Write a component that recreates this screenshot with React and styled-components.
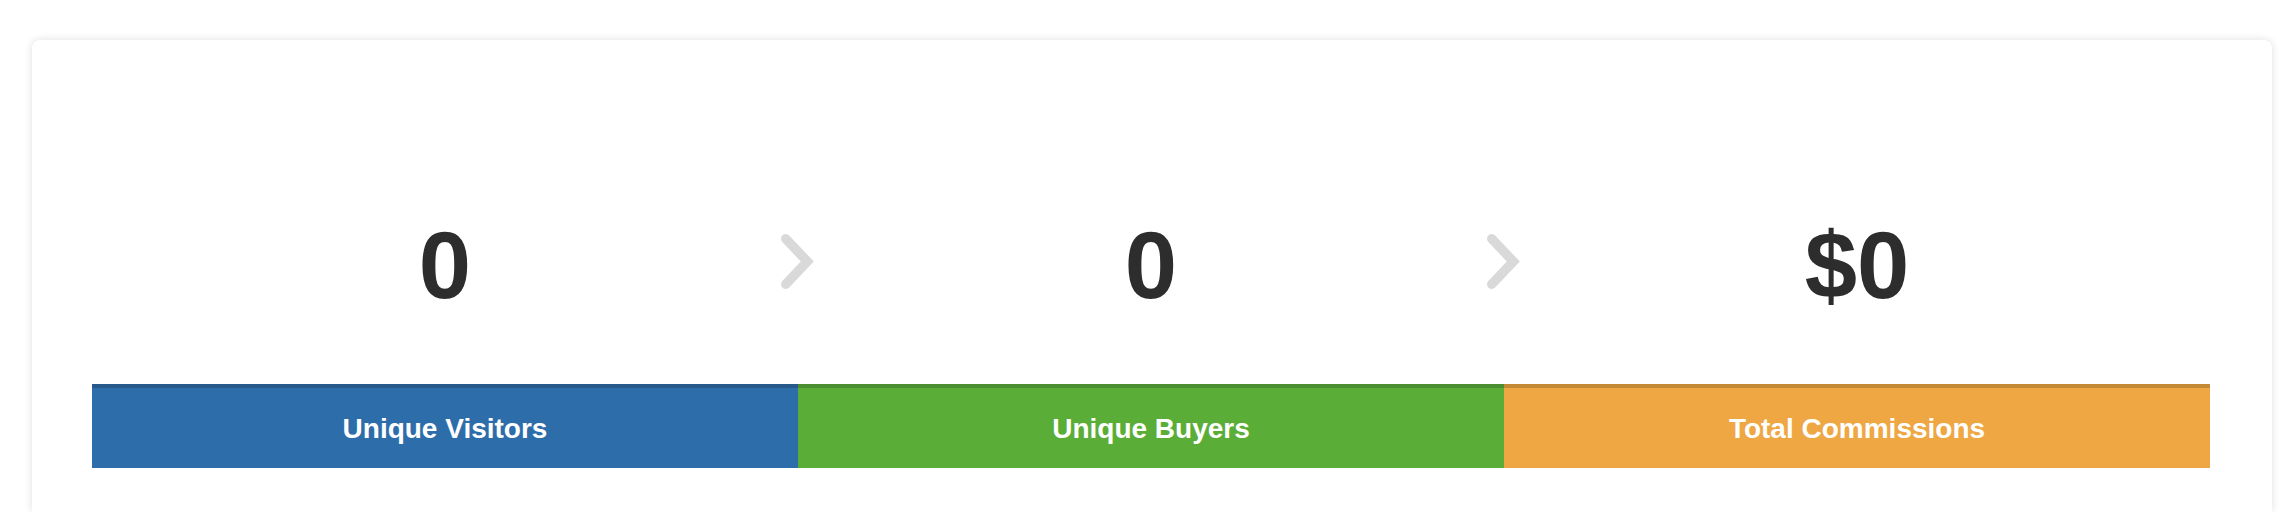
import React from "react";
import styled, { createGlobalStyle } from "styled-components";

const GlobalStyle = createGlobalStyle`
  html, body {
    margin: 0;
    padding: 0;
    background: #fff;
    font-family: "Liberation Sans", Arial, sans-serif;
  }
`;

const steps = [
  { value: "0", label: "Unique Visitors", bg: "#2d6daa", edge: "#275a8b" },
  { value: "0", label: "Unique Buyers", bg: "#5aae37", edge: "#4a8e2f" },
  { value: "$0", label: "Total Commissions", bg: "#eea742", edge: "#c48935" },
];

function Chevron() {
  return (
    <svg width="34" height="56" viewBox="0 0 34 56">
      <polyline
        points="4.75,4.75 26.3,27.5 4.75,50.25"
        fill="none"
        stroke="#d9d9d9"
        strokeWidth="9.5"
        strokeLinecap="round"
        strokeLinejoin="miter"
      />
    </svg>
  );
}

export default function App() {
  return (
    <>
      <GlobalStyle />
      <Card>
        <Funnel>
          {steps.map((s, i) => (
            <Step key={s.label}>
              <Value>{s.value}</Value>
              {i < steps.length - 1 && (
                <Arrow>
                  <Chevron />
                </Arrow>
              )}
              <Label $bg={s.bg} $edge={s.edge}>
                {s.label}
              </Label>
            </Step>
          ))}
        </Funnel>
      </Card>
    </>
  );
}

const Card = styled.section`
  margin: 40px 22px 0 32px;
  height: 472px;
  background: #fff;
  border-radius: 8px 8px 0 0;
  box-shadow: 0 0 9px rgba(0, 0, 0, 0.13);
  padding: 179px 62px 0 60px;
  box-sizing: border-box;
`;

const Funnel = styled.div`
  display: grid;
  grid-template-columns: repeat(3, 1fr);
`;

const Step = styled.div`
  position: relative;
  display: flex;
  flex-direction: column;
`;

const Value = styled.div`
  font-size: 94px;
  line-height: 1;
  font-weight: bold;
  color: #2d2d2d;
  text-align: center;
  height: 94px;
  margin-bottom: 71px;
`;

const Arrow = styled.div`
  position: absolute;
  right: 0;
  top: 15px;
  transform: translateX(50%);
  display: flex;
`;

const Label = styled.div`
  height: 80px;
  border-top: 4px solid ${(p) => p.$edge};
  background: ${(p) => p.$bg};
  color: #fff;
  font-size: 28px;
  font-weight: bold;
  padding-top: 2px;
  box-sizing: content-box;
  height: 78px;
  display: flex;
  align-items: center;
  justify-content: center;
`;
